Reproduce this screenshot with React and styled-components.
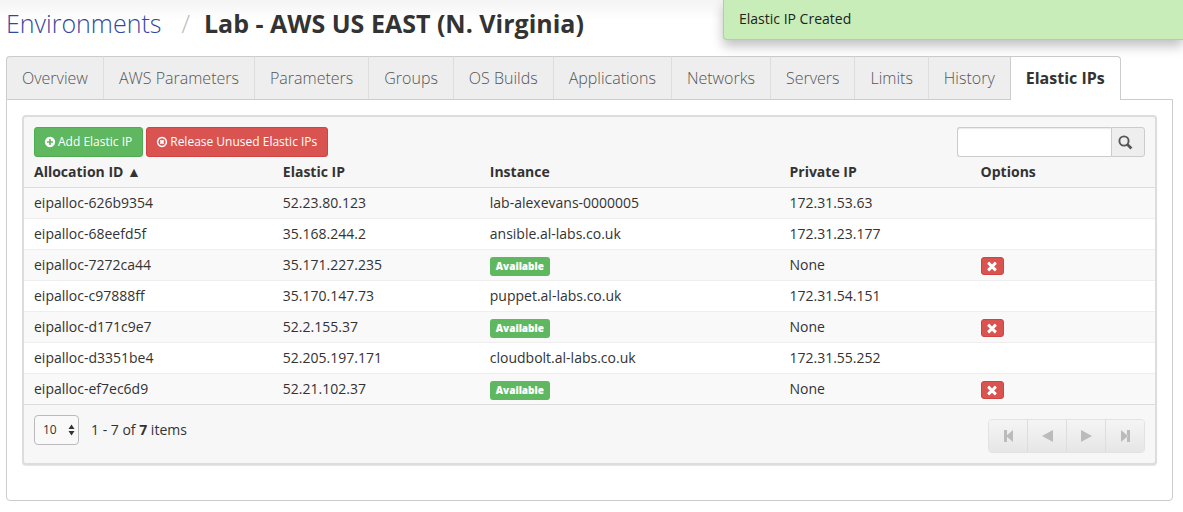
import React from "react";
import styled, { createGlobalStyle, css } from "styled-components";

const GlobalStyle = createGlobalStyle`
  *, *::before, *::after { box-sizing: border-box; }
  body {
    margin: 0;
    background: #fff linear-gradient(#f4f4f4, #fff) no-repeat 0 0 / 100% 20px;
    color: #333;
    font: 14px/20px "Open Sans", "Noto Sans", sans-serif;
  }
  button, input, select { font: inherit; color: inherit; margin: 0; }
`;

const Page = styled.main`
  padding: 4px 10px 12px 6px;
`;

const Title = styled.h1`
  display: flex;
  gap: 20px;
  margin: 0;
  font-size: 25px;
  line-height: 38px;
  font-weight: 700;
`;

const Crumb = styled.a`
  color: #3248a0;
  font-weight: 300;
  text-decoration: none;
`;

const Slash = styled.span`
  color: #bbb;
  font-weight: 300;
`;

const TitleText = styled.span`
  margin-left: -6px;
`;

const Toast = styled.div`
  position: absolute;
  top: 0;
  right: 0;
  width: 460px;
  padding: 9px 15px 10px;
  background: #c9edb8;
  border: 1px solid #a7d59b;
  border-width: 0 0 1px 1px;
  border-bottom-left-radius: 4px;
  box-shadow: 0 6px 12px rgba(0, 0, 0, 0.25);
  color: #222;
`;

const Tabs = styled.nav`
  display: flex;
  margin-top: 14px;
`;

const Tab = styled.a`
  padding: 10px 15px;
  border-top: 1px solid #ccc;
  border-left: 1px solid #ddd;
  background: #eee;
  color: #555;
  font-size: 16px;
  line-height: 22px;
  font-weight: 300;
  text-decoration: none;
  white-space: nowrap;
  &:first-child {
    border-left-color: #ccc;
    border-top-left-radius: 4px;
  }
  ${(p) =>
    p.$active &&
    css`
      margin-bottom: -1px;
      border-right: 1px solid #ccc;
      border-left-color: #ccc;
      border-top-right-radius: 4px;
      background: #fff;
      color: #333;
      font-weight: 700;
    `}
`;

const Panel = styled.section`
  padding: 15px 15px 35px;
  border: 1px solid #ccc;
  border-radius: 0 0 4px 4px;
`;

const Grid = styled.div`
  border: 2px solid #ddd;
  border-radius: 4px;
  background: #f7f7f7;
  box-shadow: 0 1px 1px rgba(0, 0, 0, 0.1);
`;

const Toolbar = styled.div`
  display: flex;
  gap: 3px;
  padding: 10px 10px 0;
`;

const tones = {
  green: css`
    background: #5fb760;
    border-color: #50ac50;
  `,
  red: css`
    background: #d95350;
    border-color: #d04340;
  `,
};

const ActionButton = styled.button`
  display: flex;
  align-items: center;
  gap: 2px;
  height: 30px;
  padding: 0 10px 0 9px;
  border: 1px solid;
  border-radius: 3px;
  color: #fff;
  font-size: 12px;
  font-weight: 500;
  ${(p) => tones[p.$tone]}
`;

const SearchForm = styled.form`
  display: flex;
  width: 188px;
  height: 30px;
  margin-left: auto;
`;

const SearchInput = styled.input`
  flex: 1;
  min-width: 0;
  padding: 0 8px;
  border: 1px solid #ccc;
  border-right: 0;
  border-radius: 3px 0 0 3px;
  background: #fff;
  box-shadow: inset 0 1px 1px rgba(0, 0, 0, 0.08);
`;

const SearchButton = styled.button`
  display: flex;
  align-items: center;
  width: 34px;
  padding: 0 6px;
  border: 1px solid #ccc;
  border-radius: 0 3px 3px 0;
  background: #eee;
  color: #555;
`;

const Table = styled.table`
  width: 100%;
  table-layout: fixed;
  border-collapse: separate;
  border-spacing: 0;
`;

const HeadCell = styled.th`
  width: ${(p) => p.$width};
  height: 31px;
  padding: 0 10px;
  border-bottom: 1px solid #ddd;
  text-align: left;
  font-weight: 700;
`;

const Row = styled.tr`
  background: #fff;
  &:nth-child(odd) { background: #f9f9f9; }
`;

const Cell = styled.td`
  height: 31px;
  padding: 0 10px;
  border-bottom: 1px solid #eee;
  ${Row}:last-child & { border-color: #ddd; }
`;

const Badge = styled.span`
  display: block;
  width: fit-content;
  margin-top: 3px;
  padding: 0 6px;
  border-radius: 3px;
  background: #5fb760;
  color: #fff;
  font-size: 10px;
  line-height: 19px;
  font-weight: 800;
`;

const RemoveButton = styled.button`
  display: flex;
  align-items: center;
  justify-content: center;
  width: 23px;
  height: 18px;
  margin-top: 2px;
  padding: 0;
  border: 1px solid;
  border-radius: 3px;
  color: #fff;
  ${tones.red}
`;

const Footer = styled.footer`
  display: flex;
  align-items: flex-start;
  padding: 10px;
`;

const SelectBox = styled.div`
  display: grid;
  align-items: center;
  & > * { grid-area: 1 / 1; }
  svg {
    justify-self: end;
    margin-right: 4px;
    pointer-events: none;
  }
`;

const PageSize = styled.select`
  appearance: none;
  width: 45px;
  height: 30px;
  padding: 0 8px;
  border: 1px solid #bbb;
  border-radius: 4px;
  background: #f9f9f9;
  font-size: 12px;
`;

const Count = styled.span`
  margin-left: 12px;
  line-height: 30px;
`;

const Pager = styled.div`
  display: flex;
  margin: 4px 0 0 auto;
  border: 1px solid #e2e2e2;
  border-radius: 4px;
  overflow: hidden;
`;

const PagerButton = styled.button`
  display: flex;
  align-items: center;
  justify-content: center;
  width: 39px;
  height: 32px;
  padding: 0;
  border: 0;
  background: linear-gradient(#f5f5f5, #e6e6e6);
  color: #bbb;
  & + & { border-left: 1px solid #ddd; }
  &:first-child { width: 38px; }
`;

const glyphs = {
  plus: "M1344 960v-128q0-26-19-45t-45-19h-256v-256q0-26-19-45t-45-19h-128q-26 0-45 19t-19 45v256h-256q-26 0-45 19t-19 45v128q0 26 19 45t45 19h256v256q0 26 19 45t45 19h128q26 0 45-19t19-45v-256h256q26 0 45-19t19-45zm320-64q0 209-103 385.5t-279.5 279.5-385.5 103-385.5-103-279.5-279.5-103-385.5 103-385.5 279.5-279.5 385.5-103 385.5 103 279.5 279.5 103 385.5z",
  timesCircle:
    "M1225 1079l-146 146q-10 10-23 10t-23-10l-137-137-137 137q-10 10-23 10t-23-10l-146-146q-10-10-10-23t10-23l137-137-137-137q-10-10-10-23t10-23l146-146q10-10 23-10t23 10l137 137 137-137q10-10 23-10t23 10l146 146q10 10 10 23t-10 23l-137 137 137 137q10 10 10 23t-10 23zm215-183q0-148-73-273t-198-198-273-73-273 73-198 198-73 273 73 273 198 198 273 73 273-73 198-198 73-273zm224 0q0 209-103 385.5t-279.5 279.5-385.5 103-385.5-103-279.5-279.5-103-385.5 103-385.5 279.5-279.5 385.5-103 385.5 103 279.5 279.5 103 385.5z",
  times:
    "M1490 1322q0 40-28 68l-136 136q-28 28-68 28t-68-28l-294-294-294 294q-28 28-68 28t-68-28l-136-136q-28-28-28-68t28-68l294-294-294-294q-28-28-28-68t28-68l136-136q28-28 68-28t68 28l294 294 294-294q28-28 68-28t68 28l136 136q28 28 28 68t-28 68l-294 294 294 294q28 28 28 68z",
};

const Glyph = ({ name, size = 12 }) => (
  <svg width={size} height={size} viewBox="0 0 1792 1792" fill="currentColor" aria-hidden="true">
    <path fillRule="evenodd" d={glyphs[name]} />
  </svg>
);

const pagerIcons = [
  ["First page", "M3 1h3v12H3zM12 1v12L5 7z"],
  ["Previous page", "M13 1v12L2 7z"],
  ["Next page", "M2 1v12L13 7z"],
  ["Last page", "M9 1h3v12H9zM3 1v12L10 7z"],
];

const tabs = [
  "Overview", "AWS Parameters", "Parameters", "Groups", "OS Builds", "Applications",
  "Networks", "Servers", "Limits", "History", "Elastic IPs",
];

const columns = [
  ["Allocation ID ▲", "22%"],
  ["Elastic IP", "18.3%"],
  ["Instance", "26.5%"],
  ["Private IP", "16.9%"],
  ["Options", "auto"],
];

const addresses = [
  ["eipalloc-626b9354", "52.23.80.123", "lab-alexevans-0000005", "172.31.53.63"],
  ["eipalloc-68eefd5f", "35.168.244.2", "ansible.al-labs.co.uk", "172.31.23.177"],
  ["eipalloc-7272ca44", "35.171.227.235", null, "None"],
  ["eipalloc-c97888ff", "35.170.147.73", "puppet.al-labs.co.uk", "172.31.54.151"],
  ["eipalloc-d171c9e7", "52.2.155.37", null, "None"],
  ["eipalloc-d3351be4", "52.205.197.171", "cloudbolt.al-labs.co.uk", "172.31.55.252"],
  ["eipalloc-ef7ec6d9", "52.21.102.37", null, "None"],
];

export default function App() {
  return (
    <>
      <GlobalStyle />
      <Page>
        <Title>
          <Crumb href="#environments">Environments</Crumb>
          <Slash>/</Slash>
          <TitleText>Lab - AWS US EAST (N. Virginia)</TitleText>
        </Title>
        <Tabs>
          {tabs.map((label) => (
            <Tab key={label} href="#tab" $active={label === "Elastic IPs"}>
              {label}
            </Tab>
          ))}
        </Tabs>
        <Panel>
          <Grid>
            <Toolbar>
              <ActionButton type="button" $tone="green">
                <Glyph name="plus" />
                Add Elastic IP
              </ActionButton>
              <ActionButton type="button" $tone="red">
                <Glyph name="timesCircle" />
                Release Unused Elastic IPs
              </ActionButton>
              <SearchForm onSubmit={(e) => e.preventDefault()}>
                <SearchInput type="text" aria-label="Search" />
                <SearchButton type="submit" aria-label="Search">
                  <svg width="15" height="15" viewBox="0 0 15 15" fill="none" stroke="currentColor">
                    <circle cx="6" cy="6" r="4.6" strokeWidth="1.9" />
                    <path d="M9.4 9.4l4 4" strokeWidth="2.8" />
                  </svg>
                </SearchButton>
              </SearchForm>
            </Toolbar>
            <Table>
              <thead>
                <tr>
                  {columns.map(([label, width]) => (
                    <HeadCell key={label} $width={width}>{label}</HeadCell>
                  ))}
                </tr>
              </thead>
              <tbody>
                {addresses.map(([id, ip, instance, privateIp]) => (
                  <Row key={id}>
                    <Cell>{id}</Cell>
                    <Cell>{ip}</Cell>
                    <Cell>{instance || <Badge>Available</Badge>}</Cell>
                    <Cell>{privateIp}</Cell>
                    <Cell>
                      {!instance && (
                        <RemoveButton type="button" aria-label={`Release ${ip}`}>
                          <Glyph name="times" size={14} />
                        </RemoveButton>
                      )}
                    </Cell>
                  </Row>
                ))}
              </tbody>
            </Table>
            <Footer>
              <SelectBox>
                <PageSize aria-label="Items per page" defaultValue="10">
                  <option>10</option>
                  <option>25</option>
                  <option>50</option>
                </PageSize>
                <svg width="7" height="12" viewBox="0 0 7 12" fill="#333" aria-hidden="true">
                  <path d="M3.5 0.5L6.5 5h-6zM3.5 11.5L6.5 7h-6z" />
                </svg>
              </SelectBox>
              <Count>
                1 - 7 of <b>7</b> items
              </Count>
              <Pager>
                {pagerIcons.map(([label, d]) => (
                  <PagerButton key={label} type="button" aria-label={label}>
                    <svg width="15" height="14" viewBox="0 0 15 14" fill="currentColor">
                      <path d={d} />
                    </svg>
                  </PagerButton>
                ))}
              </Pager>
            </Footer>
          </Grid>
        </Panel>
      </Page>
      <Toast role="status">Elastic IP Created</Toast>
    </>
  );
}
